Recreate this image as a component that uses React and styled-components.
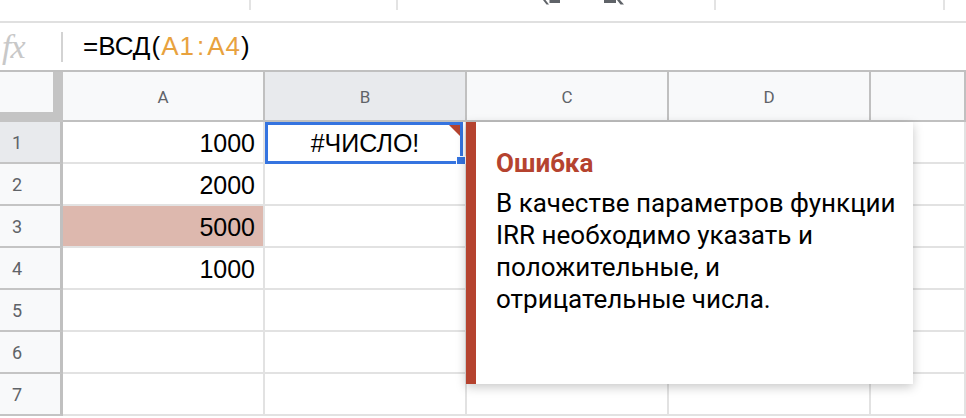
import React from "react";
import styled, { createGlobalStyle } from "styled-components";

const GlobalStyle = createGlobalStyle`
  html, body {
    margin: 0;
    padding: 0;
    background: #ffffff;
    overflow: hidden;
  }
  * { box-sizing: border-box; }
`;

const Page = styled.div`
  width: 966px;
  height: 418px;
  overflow: hidden;
  display: flex;
  flex-direction: column;
  font-family: "Liberation Sans", Arial, sans-serif;
`;

const Toolbar = styled.div`
  height: 23px;
  flex: none;
  display: flex;
  align-items: flex-start;
  border-bottom: 2px solid #e0e0e0;
  overflow: hidden;
`;

const ToolSep = styled.div`
  width: 2px;
  height: 10px;
  background: #e3e3e3;
  margin-left: ${p => p.gap}px;
`;

const ToolIcon = styled.div`
  margin-left: ${p => p.gap}px;
  display: flex;
  color: #5f6368;
`;

const FormulaBar = styled.div`
  height: 47px;
  flex: none;
  display: flex;
  align-items: center;
`;

const Fx = styled.div`
  width: 61px;
  padding-left: 2px;
  font-family: "Liberation Serif", "DejaVu Serif", serif;
  font-style: italic;
  font-size: 34px;
  color: #c8c8c8;
  letter-spacing: -1px;
`;

const FxSep = styled.div`
  width: 2px;
  height: 30px;
  background: #d3d3d3;
`;

const Formula = styled.div`
  margin-left: 20px;
  font-size: 26px;
  color: #000;
  white-space: pre;
`;

const Ref = styled.span`
  color: #e8a23e;
  letter-spacing: 1px;
`;

const Colon = styled.span`
  margin: 0 2px;
`;

const Paren = styled.span`
  margin: 0 ${p => p.m}px;
`;

const Grid = styled.div`
  display: grid;
  grid-template-columns: 63px 202px 202px 202px 202px 1fr;
  grid-template-rows: 50px repeat(7, 42px);
  border-top: 2px solid #c0c0c0;
  position: relative;
`;

const Corner = styled.div`
  background: #f8f9fa;
  border-right: 10px solid #c4c4c4;
  border-bottom: 10px solid #c4c4c4;
  box-shadow: inset 0 -2px 0 #f8f9fa;
`;

const ColHead = styled.div`
  background: ${p => (p.selected ? "#e8eaed" : "#f8f9fa")};
  border-right: 2px solid #c0c0c0;
  border-bottom: 2px solid #c0c0c0;
  display: flex;
  align-items: center;
  justify-content: center;
  font-family: Roboto, "Liberation Sans", sans-serif;
  font-size: 17px;
  color: #5f6368;
  padding-top: 2px;
`;

const RowHead = styled.div`
  background: ${p => (p.selected ? "#e8eaed" : "#f8f9fa")};
  border-right: 3px solid #c0c0c0;
  border-bottom: 2px solid #c4c4c4;
  display: flex;
  align-items: center;
  padding-left: 12px;
  font-family: Roboto, "Liberation Sans", sans-serif;
  font-size: 18px;
  color: #5f6368;
`;

const Cell = styled.div`
  position: relative;
  background: ${p => p.fill || "#fff"};
  border-right: 2px solid #e2e2e2;
  border-bottom: 2px solid #e2e2e2;
  display: flex;
  align-items: center;
  justify-content: ${p => (p.center ? "center" : "flex-end")};
  padding: 2px 8px 0 8px;
  font-size: 25px;
  color: #000;
`;

const Selection = styled.div`
  position: absolute;
  top: 0;
  left: 0;
  right: 2px;
  bottom: -2px;
  border: 3px solid #3574e0;
  pointer-events: none;
`;

const Handle = styled.div`
  position: absolute;
  right: -6px;
  bottom: -6px;
  width: 10px;
  height: 11px;
  background: #3574e0;
  border: 1px solid #fff;
`;

const ErrorMark = styled.div`
  position: absolute;
  top: 0;
  right: 0;
  width: 0;
  height: 0;
  border-top: 11px solid #b5432f;
  border-left: 11px solid transparent;
`;

const Popup = styled.div`
  position: absolute;
  top: 0;
  left: calc(100% + 1px);
  width: 447px;
  height: 262px;
  z-index: 10;
  background: #fff;
  border-left: 10px solid #b5432f;
  box-shadow: 0 3px 10px rgba(0, 0, 0, 0.22);
  padding: 25px 10px 0 20px;
  font-family: Roboto, "Liberation Sans", sans-serif;
  color: #000;
`;

const PopupTitle = styled.div`
  font-size: 26px;
  font-weight: 700;
  color: #b5432f;
  line-height: 32px;
  margin-bottom: 8px;
`;

const PopupBody = styled.div`
  font-size: 26px;
  line-height: 32px;
`;

const cols = ["A", "B", "C", "D", ""];
const values = ["1000", "2000", "5000", "1000", "", "", ""];

/* only the lower tips of the undo / redo arrows show under the cut-off toolbar */
const UndoTip = () => (
  <svg viewBox="0 0 18 5" width="18" height="5" fill="currentColor">
    <path d="M0 0h2.5l3.5 4.5H3.5z M6.5 0H17v3H6.5z" />
  </svg>
);

const RedoTip = () => (
  <svg viewBox="0 0 20 5" width="20" height="5" fill="currentColor">
    <path d="M0 0h12v3H0z M13 0h3l4 4.5h-3.5z" />
  </svg>
);

export default function App() {
  return (
    <Page>
      <GlobalStyle />
      <Toolbar>
        <ToolSep gap={249} />
        <ToolSep gap={145} />
        <ToolIcon gap={145}><UndoTip /></ToolIcon>
        <ToolIcon gap={43}><RedoTip /></ToolIcon>
        <ToolSep gap={90} />
        <ToolSep gap={227} />
      </Toolbar>
      <FormulaBar>
        <Fx>fx</Fx>
        <FxSep />
        <Formula>
          =ВСД<Paren m={1}>(</Paren>
          <Ref>A1<Colon>:</Colon>A4</Ref>
          <Paren m={0}>)</Paren>
        </Formula>
      </FormulaBar>
      <Grid>
        <Corner />
        {cols.map((c, i) => (
          <ColHead key={i} selected={c === "B"}>{c}</ColHead>
        ))}
        {values.map((v, r) => (
          <React.Fragment key={r}>
            <RowHead selected={r === 0}>{r + 1}</RowHead>
            <Cell fill={r === 2 ? "#ddb8ae" : undefined}>{v}</Cell>
            {r === 0 ? (
              <Cell center>
                #ЧИСЛО!
                <Selection>
                  <ErrorMark />
                  <Handle />
                </Selection>
                <Popup>
                  <PopupTitle>Ошибка</PopupTitle>
                  <PopupBody>
                    В качестве параметров функции IRR необходимо указать и
                    положительные, и отрицательные числа.
                  </PopupBody>
                </Popup>
              </Cell>
            ) : (
              <Cell />
            )}
            <Cell />
            <Cell />
            <Cell />
          </React.Fragment>
        ))}
      </Grid>
    </Page>
  );
}
